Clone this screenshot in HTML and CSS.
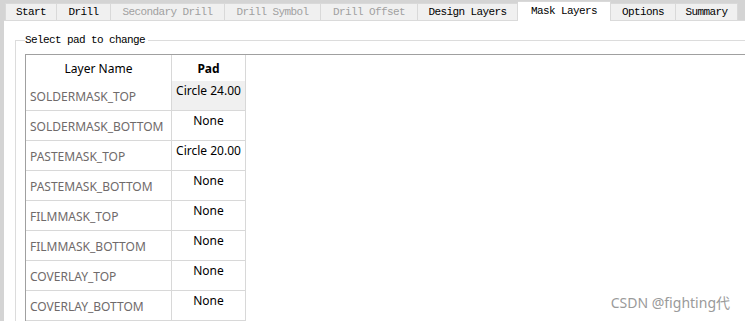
FILE: index.html
```html
<!DOCTYPE html>
<html lang="en">
<head>
    <meta charset="UTF-8">
    <title>Mask Layers</title>
    <link rel="stylesheet" href="styles.css">
</head>
<body>
    <div class="window">
        <div class="tabs">
            <div class="tab">Start</div>
            <div class="tab">Drill</div>
            <div class="tab disabled">Secondary Drill</div>
            <div class="tab disabled">Drill Symbol</div>
            <div class="tab disabled">Drill Offset</div>
            <div class="tab">Design Layers</div>
            <div class="tab active">Mask Layers</div>
            <div class="tab">Options</div>
            <div class="tab">Summary</div>
        </div>
        <div class="panel">
            <fieldset class="group">
                <legend>Select pad to change</legend>
                <div class="grid-box">
                    <div class="grid">
                        <div class="cell head">Layer Name</div>
                        <div class="cell head bold">Pad</div>

                        <div class="cell name">SOLDERMASK_TOP</div>
                        <div class="cell pad selected">Circle 24.00</div>

                        <div class="cell name">SOLDERMASK_BOTTOM</div>
                        <div class="cell pad">None</div>

                        <div class="cell name">PASTEMASK_TOP</div>
                        <div class="cell pad">Circle 20.00</div>

                        <div class="cell name">PASTEMASK_BOTTOM</div>
                        <div class="cell pad">None</div>

                        <div class="cell name">FILMMASK_TOP</div>
                        <div class="cell pad">None</div>

                        <div class="cell name">FILMMASK_BOTTOM</div>
                        <div class="cell pad">None</div>

                        <div class="cell name">COVERLAY_TOP</div>
                        <div class="cell pad">None</div>

                        <div class="cell name">COVERLAY_BOTTOM</div>
                        <div class="cell pad">None</div>
                    </div>
                </div>
            </fieldset>
        </div>
        <div class="watermark">CSDN @fighting代</div>
    </div>
</body>
</html>
```

FILE: styles.css
```css
html, body {
    margin: 0;
    padding: 0;
    height: 100%;
    overflow: hidden;
}
body {
    background: #d4d4d4;
    font-family: "Noto Sans", sans-serif;
}
.window {
    position: relative;
    height: 100%;
    display: flex;
    flex-direction: column;
}
.tabs {
    display: flex;
    align-items: flex-end;
    height: 22px;
    padding-left: 5px;
    font-family: "Liberation Mono", monospace;
    font-size: 11px;
    letter-spacing: -0.6px;
}
.tab {
    box-sizing: border-box;
    height: 17px;
    line-height: 16px;
    text-align: center;
    background: #f0f0f0;
    border: 1px solid #d9d9d9;
    border-bottom: none;
    border-left: none;
    color: #000;
    white-space: nowrap;
}
.tab:first-child { width: 52px; border-left: 1px solid #d9d9d9; }
.tab:nth-child(2) { width: 54px; }
.tab:nth-child(3) { width: 114px; }
.tab:nth-child(4) { width: 96px; }
.tab:nth-child(5) { width: 97px; }
.tab:nth-child(6) { width: 100px; }
.tab:nth-child(7) { width: 93px; }
.tab:nth-child(8) { width: 65px; }
.tab:nth-child(9) { width: 62px; }
.tab.disabled {
    color: #a0a0a0;
}
.tab.active {
    background: #fff;
    position: relative;
    z-index: 1;
    margin-bottom: -1px;
    height: 20px;
    line-height: 18px;
}
.panel {
    flex: 1;
    margin-left: 4px;
    background: #fff;
    border-top: 1px solid #dadada;
    padding: 11px 0 0 11px;
}
.group {
    margin: 0;
    padding: 6px 0 0 9px;
    border: 1px solid #dcdcdc;
    border-right: none;
    border-bottom: none;
    height: 100%;
    box-sizing: border-box;
    min-width: 0;
}
.group legend {
    font-family: "Liberation Mono", monospace;
    font-size: 11px;
    letter-spacing: -0.6px;
    padding: 0 3px 0 0;
    margin-left: 0;
    line-height: 16px;
}
.grid-box {
    border-top: 1px solid #a0a0a0;
    border-left: 1px solid #a0a0a0;
    height: 100%;
}
.grid {
    display: grid;
    grid-template-columns: 146px 74px;
    grid-auto-rows: 30px;
    grid-template-rows: 26px;
    font-size: 12px;
}
.cell {
    border-right: 1px solid #d8d8d8;
    border-bottom: 1px solid #d8d8d8;
    white-space: nowrap;
}
.head {
    border-bottom: none;
    text-align: center;
    padding-top: 2px;
    line-height: 24px;
    color: #000;
}
.bold {
    font-weight: bold;
}
.name {
    display: flex;
    align-items: center;
    padding: 2px 0 0 4px;
    color: #6f6a6a;
}
.pad {
    text-align: center;
    padding-top: 2px;
    line-height: 16px;
    color: #000;
}
.selected {
    background: #f0f0f0;
}
.watermark {
    position: absolute;
    right: 15px;
    bottom: 9px;
    font-family: "Noto Sans", "Noto Sans CJK SC", sans-serif;
    font-size: 14px;
    color: #9a9a9a;
}
```
